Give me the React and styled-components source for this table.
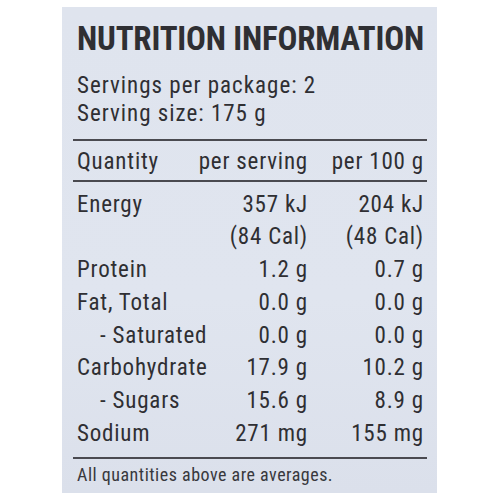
import React from 'react'
import styled, { createGlobalStyle } from 'styled-components'

const Global = createGlobalStyle`
  html, body {
    margin: 0;
    padding: 0;
    background: #ffffff;
  }
  body {
    width: 500px;
    height: 500px;
    overflow: hidden;
  }
`

const Page = styled.div`
  display: flex;
  justify-content: center;
  padding-top: 7px;
  width: 500px;
  height: 500px;
  box-sizing: border-box;
`

const Panel = styled.div`
  width: 375px;
  height: 486px;
  box-sizing: border-box;
  margin-left: -1px;
  padding: 0 13px 0 15px;
  background: linear-gradient(180deg, #dfe4ee 0%, #e0e5ef 60%, #dbe0eb 100%);
  color: #2f2f33;
  font-family: "Liberation Sans Narrow", "Roboto Condensed", "Liberation Sans", sans-serif;
  display: flex;
  flex-direction: column;
`

const Title = styled.h1`
  margin: 0;
  padding-top: 14px;
  font-size: 33px;
  line-height: 36px;
  font-weight: bold;
  letter-spacing: -0.2px;
  white-space: nowrap;
`

const Meta = styled.div`
  margin-top: 15px;
  font-size: 23px;
  line-height: 28px;
  letter-spacing: 1px;
`

const Rule = styled.div`
  height: 2px;
  background: #4a4a50;
  margin: ${p => p.$m || '0'};
  margin-left: -4px;
  margin-right: -3px;
`

const Grid = styled.div`
  display: grid;
  grid-template-columns: minmax(0, 1fr) 120px 116px;
  font-size: 23px;
  line-height: 32.7px;
  letter-spacing: 0.8px;
`

const Cell = styled.div`
  text-align: ${p => (p.$right ? 'right' : 'left')};
  padding-left: ${p => (p.$indent ? '23px' : '0')};
  white-space: nowrap;
`

const Footer = styled.div`
  margin-top: 4px;
  font-size: 18px;
  line-height: 24px;
  letter-spacing: 0.5px;
  color: #38383d;
`

const rows = [
  ['Energy', '357 kJ', '204 kJ'],
  ['', '(84 Cal)', '(48 Cal)'],
  ['Protein', '1.2 g', '0.7 g'],
  ['Fat, Total', '0.0 g', '0.0 g'],
  ['- Saturated', '0.0 g', '0.0 g', true],
  ['Carbohydrate', '17.9 g', '10.2 g'],
  ['- Sugars', '15.6 g', '8.9 g', true],
  ['Sodium', '271 mg', '155 mg'],
]

export default function App() {
  return (
    <Page>
      <Global />
      <Panel>
        <Title>NUTRITION INFORMATION</Title>
        <Meta>
          Servings per package: 2<br />
          Serving size: 175 g
        </Meta>
        <Rule $m="11px 0 0" />
        <Grid style={{ marginTop: '5px', marginBottom: '1px' }}>
          <Cell>Quantity</Cell>
          <Cell $right>per serving</Cell>
          <Cell $right>per 100 g</Cell>
        </Grid>
        <Rule />
        <Grid style={{ marginTop: '7px' }}>
          {rows.map(([label, a, b, sub], i) => (
            <React.Fragment key={i}>
              <Cell $indent={sub}>{label}</Cell>
              <Cell $right>{a}</Cell>
              <Cell $right>{b}</Cell>
            </React.Fragment>
          ))}
        </Grid>
        <Rule $m="7px 0 0" />
        <Footer>All quantities above are averages.</Footer>
      </Panel>
    </Page>
  )
}
